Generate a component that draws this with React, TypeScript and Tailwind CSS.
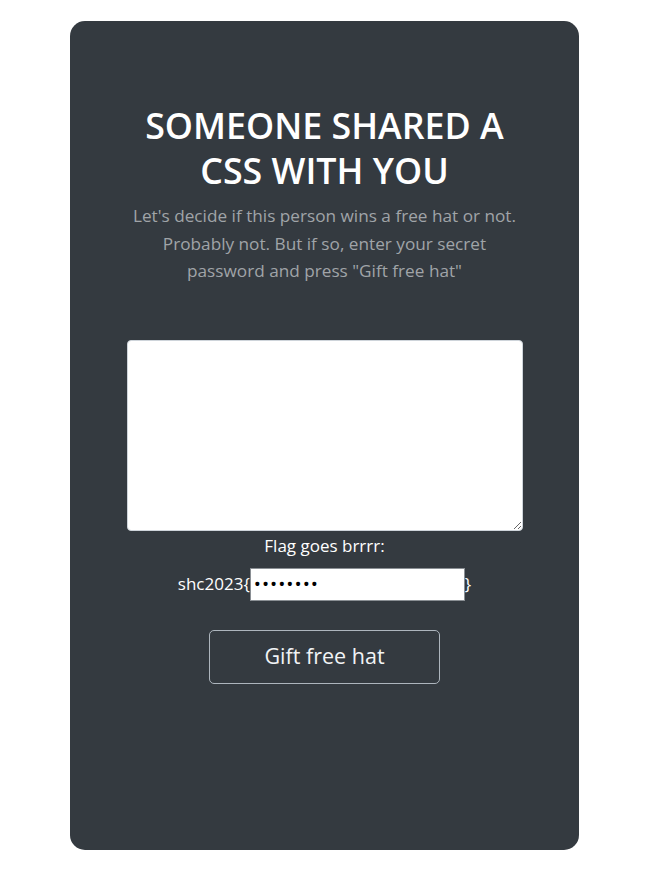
export default function App() {
  return (
    <main className="min-h-[893px] bg-white pt-[21px] font-['Open_Sans',sans-serif]">
      {/* CARD */}
      <div className="ml-[70px] w-[509px] h-[829px] rounded-[15px] bg-[#343a40] flex flex-col items-center pt-[82px]">

        <h1 className="w-[420px] text-center text-[35.8px] leading-[45px] font-semibold text-white">
          SOMEONE SHARED A CSS WITH YOU
        </h1>

        <p className="mt-[9px] w-[396px] text-center text-[17.2px] leading-[27.5px] text-[#a0a4a8]">
          Let's decide if this person wins a free hat or not. Probably not. But if so, enter your secret
          password and press "Gift free hat"
        </p>

        <textarea className="mt-[55px] w-[396px] h-[191px] rounded-[4px] bg-white border border-[#ced4da] resize-y"></textarea>

        <label className="mt-[2px] text-[17px] leading-[26px] text-white">Flag goes brrrr:</label>

        <div className="mt-[9px] flex items-center text-[17px] text-white">
          <span>shc2023{"{"}</span>
          <input
            type="password"
            defaultValue="abcdefgh"
            className="w-[215px] h-[33px] bg-white text-black px-[3px] text-[19px] tracking-[1px] border border-[#8a8f94] outline-none"
          />
          <span>{"}"}</span>
        </div>

        <button className="mt-[29px] w-[231px] h-[54px] rounded-[5px] border border-[#adb5bd] text-[21.5px] text-[#f1f3f5]">
          Gift free hat
        </button>

      </div>
    </main>
  );
}
